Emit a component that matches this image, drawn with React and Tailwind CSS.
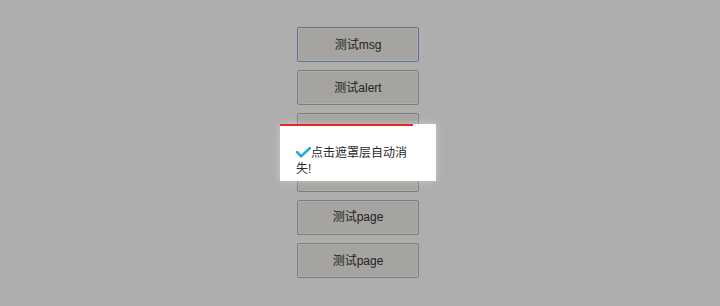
import React from "react";

const labels = ["测试msg", "测试alert", "", "", "测试page", "测试page"];

export default function App() {
  return (
    <div
      className="relative w-full h-[306px] bg-[#aeaeae] overflow-hidden"
      style={{ fontFamily: '"Liberation Sans", "Noto Sans CJK SC", sans-serif' }}
    >
      <div className="flex flex-col items-center gap-[8px] pt-[27px] mr-[4px]">
        {labels.map((l, i) => (
          <button
            key={i}
            className={`w-[122px] h-[35.2px] rounded-[2px] border text-[12px] text-[#222] bg-[#a6a4a0] shadow-[inset_0_0_0_1px_rgba(255,255,255,0.1)] ${
              i === 0 ? "border-[#5f7398]" : "border-[#7f7e7d]"
            }`}
          >
            {l}
          </button>
        ))}
      </div>

      <div className="absolute left-[280px] top-[124px] w-[156px] h-[57px] bg-white shadow-[0_0_8px_rgba(255,255,255,0.35)]">
        <div className="w-[133px] h-[2px] bg-[#e8281f]" />
        <div className="pl-[16px] pt-[19px] w-[132px] text-[12px] leading-[16px] text-[#2a2a2a]">
          <svg
            className="inline-block align-[-1px]"
            width="15"
            height="11"
            viewBox="0 0 15 11"
          >
            <path
              d="M1.2 5.2 L5 9.4 L14 1"
              fill="none"
              stroke="#2aa8df"
              strokeWidth="2.6"
              strokeLinecap="round"
              strokeLinejoin="round"
            />
          </svg>
          点击遮罩层自动消失!
        </div>
      </div>
    </div>
  );
}
